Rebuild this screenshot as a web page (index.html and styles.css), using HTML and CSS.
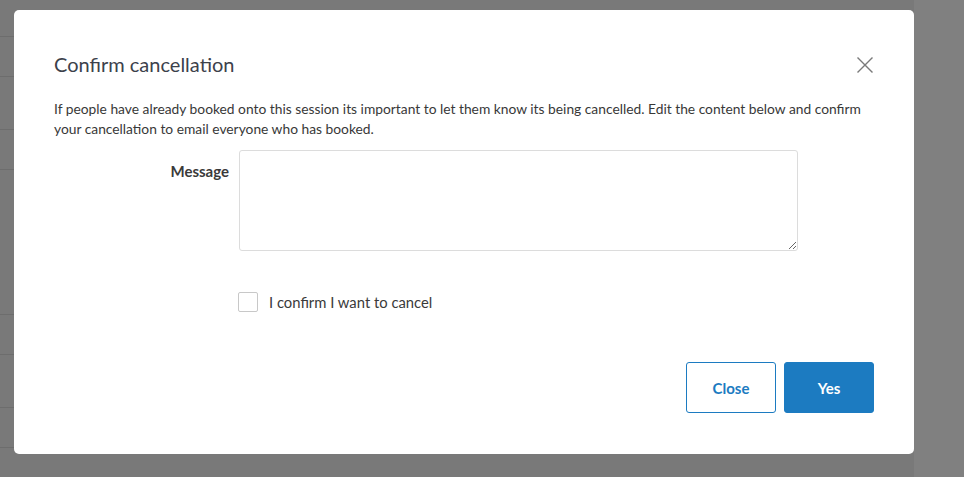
FILE: index.html
```html
<!DOCTYPE html>
<html lang="en">
<head>
<meta charset="utf-8">
<title>Confirm cancellation</title>
<link rel="stylesheet" href="styles.css">
</head>
<body>
<div class="page">
  <div class="row r1"></div>
  <div class="row r2"></div>
  <div class="row r3"></div>
  <div class="row r4"></div>
  <div class="row r5"></div>
  <div class="row r6"></div>
  <div class="row r7"></div>
  <div class="row r8"></div>
</div>
<div class="modal" role="dialog" aria-labelledby="modal-title">
  <div class="modal-header">
    <h2 id="modal-title" class="modal-title">Confirm cancellation</h2>
    <button class="close-btn" type="button" aria-label="Close">
      <svg width="16" height="16" viewBox="0 0 16 16" aria-hidden="true"><path d="M1 1 L15 15 M15 1 L1 15" stroke="#7a7a7a" stroke-width="1.4" fill="none" stroke-linecap="square"/></svg>
    </button>
  </div>
  <p class="desc">If people have already booked onto this session its important to let them know its being cancelled. Edit the content below and confirm your cancellation to email everyone who has booked.</p>
  <div class="form-row">
    <label class="form-label" for="message">Message</label>
    <textarea id="message" class="form-textarea"></textarea>
  </div>
  <label class="check-row">
    <span class="checkbox"></span>
    <span class="check-label">I confirm I want to cancel</span>
  </label>
  <div class="modal-footer">
    <button class="btn btn-outline" type="button">Close</button>
    <button class="btn btn-primary" type="button">Yes</button>
  </div>
</div>
</body>
</html>
```

FILE: styles.css
```css
html, body {
  margin: 0;
  padding: 0;
  height: 100%;
}
body {
  background: #808080;
  font-family: Lato, "Open Sans", Arial, sans-serif;
  overflow: hidden;
}
.page {
  display: flex;
  flex-direction: column;
  width: 914px;
  height: 100%;
  background: #797979;
}
.row {
  border-bottom: 1px solid #6d6d6d;
  box-sizing: border-box;
}
.r1 { height: 37px; }
.r2 { height: 40px; }
.r3 { height: 53px; }
.r4 { height: 40px; }
.r5 { height: 145px; }
.r6 { height: 40px; }
.r7 { height: 53px; }
.r8 { height: 40px; }

.modal {
  position: fixed;
  left: 14px;
  top: 10px;
  width: 900px;
  height: 444px;
  box-sizing: border-box;
  background: #fff;
  border-radius: 5px;
  padding: 42px 40px 41px;
  display: flex;
  flex-direction: column;
  color: #333;
}
.modal-header {
  display: flex;
  justify-content: space-between;
  align-items: center;
  height: 24px;
}
.modal-title {
  margin: 0;
  font-size: 20px;
  line-height: 24px;
  font-weight: 400;
  color: #3c414b;
}
.close-btn {
  border: 0;
  background: none;
  padding: 0;
  width: 16px;
  height: 16px;
  margin-right: 1px;
  margin-top: 1px;
  cursor: pointer;
  display: flex;
}
.desc {
  margin: 23px 0 0;
  font-size: 13.8px;
  line-height: 20px;
  color: #383838;
}
.form-row {
  display: grid;
  grid-template-columns: 175px 559px;
  column-gap: 10px;
  margin-top: 11px;
}
.form-label {
  text-align: right;
  font-weight: 700;
  font-size: 15px;
  line-height: 20px;
  padding-top: 11px;
  color: #3a3a3a;
}
.form-textarea {
  box-sizing: border-box;
  height: 101px;
  border: 1px solid #dcdcdc;
  border-radius: 3px;
  margin: 0;
  font-family: inherit;
  font-size: 14px;
  padding: 6px 10px;
  resize: both;
  outline: none;
}
.check-row {
  display: flex;
  align-items: center;
  margin-top: 41px;
  margin-left: 184px;
  gap: 11px;
}
.checkbox {
  box-sizing: border-box;
  width: 20px;
  height: 20px;
  border: 1px solid #c8c8c8;
  border-radius: 2px;
  background: #fff;
}
.check-label {
  font-size: 14.8px;
  line-height: 20px;
  color: #3a3a3a;
}
.modal-footer {
  margin-top: auto;
  display: flex;
  justify-content: flex-end;
  gap: 8px;
}
.btn {
  box-sizing: border-box;
  width: 90px;
  height: 51px;
  border-radius: 3px;
  font-family: inherit;
  font-size: 15px;
  font-weight: 700;
  cursor: pointer;
}
.btn-outline {
  background: #fff;
  border: 1px solid #1c7bc1;
  color: #1c7bc1;
}
.btn-primary {
  background: #1c7bc1;
  border: 1px solid #1c7bc1;
  color: #fff;
}
```
